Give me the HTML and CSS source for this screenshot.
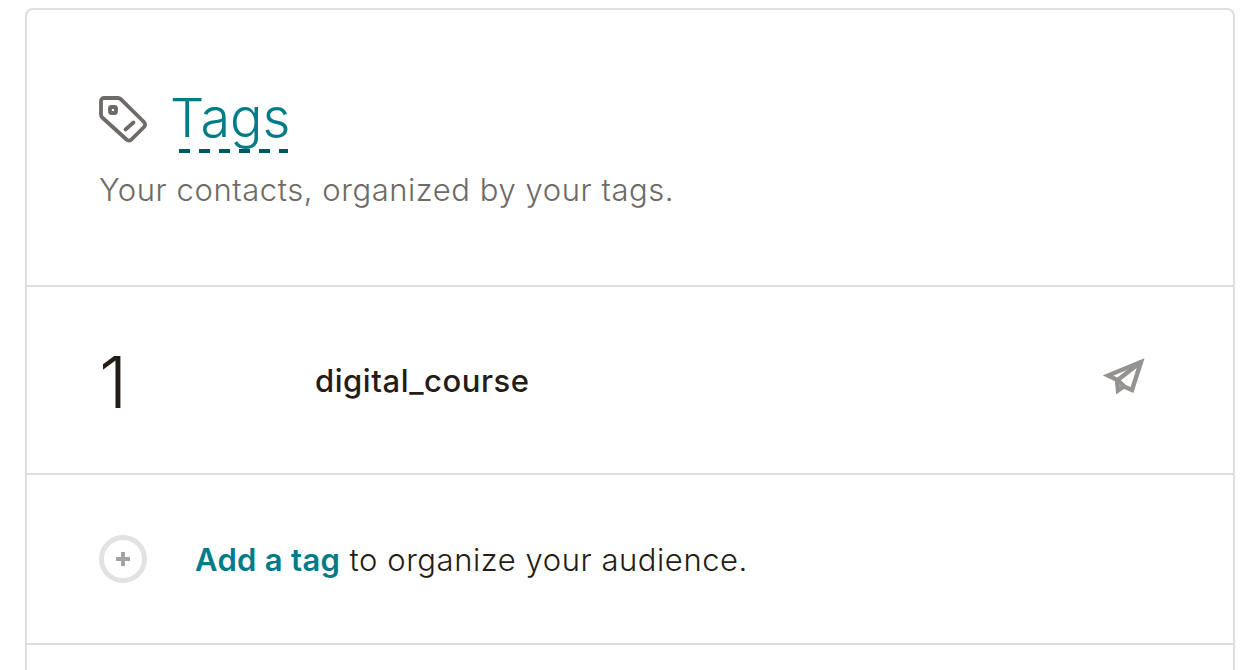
FILE: index.html
```html
<!DOCTYPE html>
<html lang="en">
<head>
<meta charset="utf-8">
<title>Tags</title>
<link rel="stylesheet" href="styles.css">
</head>
<body>
<main class="card">
  <section class="head">
    <div class="title-row">
      <svg class="tag-icon" width="50" height="50" viewBox="0 0 50 50" fill="none" stroke="#6f6a66" stroke-width="3.800" stroke-linejoin="round" stroke-linecap="round">
        <path d="M3 6a3 3 0 0 1 3-3h14a4 4 0 0 1 2.800 1.200L46 27a3.500 3.500 0 0 1 0 5L33.500 44.500a3.500 3.500 0 0 1-5 0L4.200 22.500a4 4 0 0 1-1.200-2.800z"/>
        <rect x="12" y="12" width="6" height="6" rx="1.500"/>
        <path d="M27.500 34.500l8-7"/>
      </svg>
      <h1 class="title">Tags</h1>
    </div>
    <p class="sub">Your contacts, organized by your tags.</p>
  </section>
  <section class="row tag-row">
    <span class="count">1</span>
    <span class="name">digital_course</span>
    <svg class="send" width="42" height="36" viewBox="0 0 42 36" fill="none" stroke="#96928f" stroke-width="4.400" stroke-linejoin="miter">
      <path d="M38 4L5 17.500l9.500 4.500L22 29l7 3z"/>
      <path d="M38 4L14 22.500l1 10 7-5"/>
    </svg>
  </section>
  <section class="row add-row">
    <span class="plus"><svg width="16" height="16" viewBox="0 0 16 16"><path d="M8 1v14M1 8h14" stroke="#a3a3a3" stroke-width="4"/></svg></span>
    <p class="add"><a class="add-link" href="#">Add a tag</a> to organize your audience.</p>
  </section>
</main>
</body>
</html>
```
FILE: styles.css
```css
* { box-sizing: border-box; }
html, body { margin: 0; height: 670px; overflow: hidden; background: #fff; }
body { padding: 8px 21px 0 25px; font-family: Inter, "Liberation Sans", sans-serif; color: #241c15; }
.card { border: 2px solid #dedede; border-bottom: 0; border-radius: 8px 8px 0 0; height: 662px; }
.head { height: 277px; padding: 79px 0 0 72px; border-bottom: 2px solid #dedede; }
.title-row { display: flex; align-items: flex-start; gap: 22px; height: 64px; }
.tag-icon { flex: none; margin-top: 6px; margin-left: -1px; }
.title { margin: 0; width: 118px; height: 64px; font-size: 54px; font-weight: 300; line-height: 57px; color: #007c89; background: repeating-linear-gradient(90deg, #00585f 0 11px, transparent 11px 20px) 100% 100% / 109px 4px no-repeat; }
.sub { margin: 17px 0 0; font-size: 31px; font-weight: 300; line-height: 40px; letter-spacing: 0.560px; color: #6e6a66; }
.row { display: flex; align-items: center; border-bottom: 2px solid #dedede; padding-left: 72px; }
.tag-row { height: 188px; }
.count { width: 216px; margin-top: 4px; font-size: 72px; font-weight: 300; line-height: 1; }
.name { font-size: 31px; font-weight: 500; letter-spacing: 0.560px; }
.send { margin-left: auto; margin-right: 88px; margin-top: -8px; }
.add-row { height: 170px; gap: 48px; }
.plus { width: 48px; height: 48px; border: 5px solid #e2e2e2; border-radius: 50%; display: flex; align-items: center; justify-content: center; }
.add { margin: 0; font-size: 31px; font-weight: 300; letter-spacing: 0.560px; }
.add-link { color: #007c89; font-weight: 600; letter-spacing: 0.300px; text-decoration: none; }
```
